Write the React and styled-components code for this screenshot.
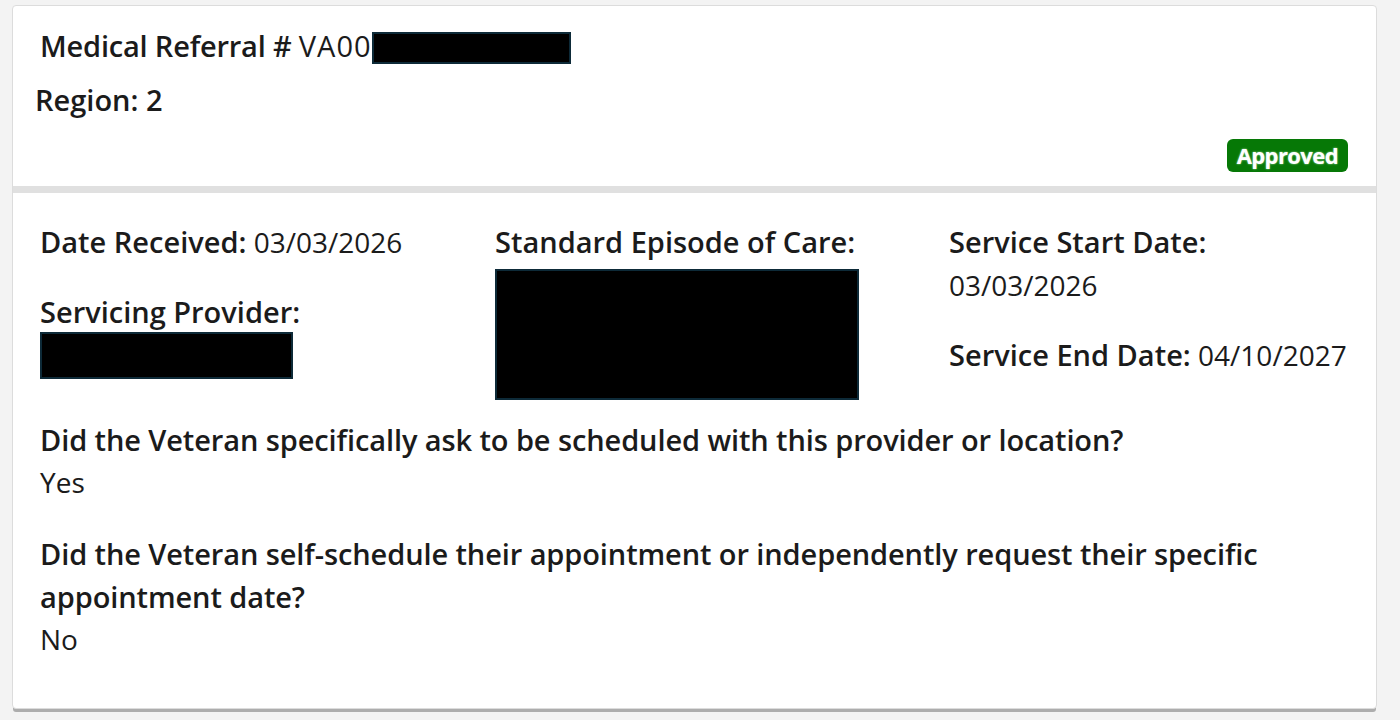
import styled, { createGlobalStyle } from 'styled-components';

const GlobalStyle = createGlobalStyle`
	html, body {
		margin: 0;
		padding: 0;
		background: #f3f3f3;
	}
	body {
		font-family: "Open Sans", "Noto Sans", sans-serif;
		color: #1b1b1b;
	}
`

const Page = styled.div`
	width: 1400px;
	height: 720px;
	box-sizing: border-box;
	padding: 5px 23px 0 12px;
	overflow: hidden;
`

const Card = styled.div`
	background: #fff;
	border: 1px solid #dcdcdc;
	border-radius: 4px;
	box-shadow: 0 4px 0 -1px #adadad;
	height: 704px;
	box-sizing: border-box;
	display: flex;
	flex-direction: column;
`

const Header = styled.div`
	height: 187px;
	box-sizing: border-box;
	padding: 18px 28px 14px 27px;
	border-bottom: 7px solid #e0e0e0;
	display: flex;
	flex-direction: column;
`

const Title = styled.div`
	font-size: 29px;
	line-height: 43px;
	font-weight: 600;
	letter-spacing: -0.2px;
`

const RegionLine = styled.div`
	font-size: 29px;
	line-height: 43px;
	font-weight: 600;
	margin: 11px 0 0 -5px;
`

const Plain = styled.span`
	font-weight: 400;
	font-size: 29px;
	letter-spacing: 1px;
`

const Redacted = styled.span`
	display: ${p => (p.$inline ? 'inline-block' : 'block')};
	width: ${p => p.$w}px;
	height: ${p => p.$h}px;
	background: #000;
	border: 2px solid #0d2a38;
	box-sizing: border-box;
	vertical-align: ${p => (p.$inline ? '-7px' : 'baseline')};
	margin-top: ${p => p.$top || 0}px;
`

const BadgeRow = styled.div`
	margin-top: auto;
	display: flex;
	justify-content: flex-end;
`

const Badge = styled.span`
	background: #067806;
	color: #fff;
	font-size: 22px;
	font-weight: 700;
	line-height: 33px;
	height: 33px;
	padding: 0 10px;
	border-radius: 6px;
	text-shadow: 0 0 2px #b9e8b9;
	letter-spacing: -0.6px;
`

const Body = styled.div`
	padding: 27px 28px 0 27px;
`

const Columns = styled.div`
	display: grid;
	grid-template-columns: 455px 454px 1fr;
`

const Column = styled.div`
	display: flex;
	flex-direction: column;
`

const Field = styled.div`
	font-size: 28px;
	line-height: 43px;
	white-space: nowrap;
	margin-bottom: ${p => p.$gap || 0}px;
`

const Label = styled.span`
	font-weight: 600;
	font-size: 29px;
`

const Question = styled.div`
	margin-top: ${p => p.$top}px;
	font-size: 28px;
	line-height: 43px;
`

const QuestionText = styled.div`
	font-weight: 600;
	font-size: 29px;
	letter-spacing: -0.1px;
	max-width: 1280px;
`

function App() {
	return (
		<>
			<GlobalStyle />
			<Page>
				<Card>
					<Header>
						<Title>
							Medical Referral # <Plain>VA00</Plain>
							<Redacted $inline $w={199} $h={32} />
						</Title>
						<RegionLine>Region: 2</RegionLine>
						<BadgeRow>
							<Badge>Approved</Badge>
						</BadgeRow>
					</Header>

					<Body>
						<Columns>
							<Column>
								<Field $gap={26}>
									<Label>Date Received:</Label> 03/03/2026
								</Field>
								<Field>
									<Label>Servicing Provider:</Label>
								</Field>
								<Redacted $w={253} $h={47} $top={-2} />
							</Column>
							<Column>
								<Field>
									<Label>Standard Episode of Care:</Label>
								</Field>
								<Redacted $w={364} $h={131} $top={5} />
							</Column>
							<Column>
								<Field>
									<Label>Service Start Date:</Label>
								</Field>
								<Field $gap={26}>03/03/2026</Field>
								<Field>
									<Label>Service End Date:</Label> 04/10/2027
								</Field>
							</Column>
						</Columns>

						<Question $top={18}>
							<QuestionText>Did the Veteran specifically ask to be scheduled with this provider or location?</QuestionText>
							<div>Yes</div>
						</Question>
						<Question $top={28}>
							<QuestionText>Did the Veteran self-schedule their appointment or independently request their specific appointment date?</QuestionText>
							<div>No</div>
						</Question>
					</Body>
				</Card>
			</Page>
		</>
	)
}

export default App;
